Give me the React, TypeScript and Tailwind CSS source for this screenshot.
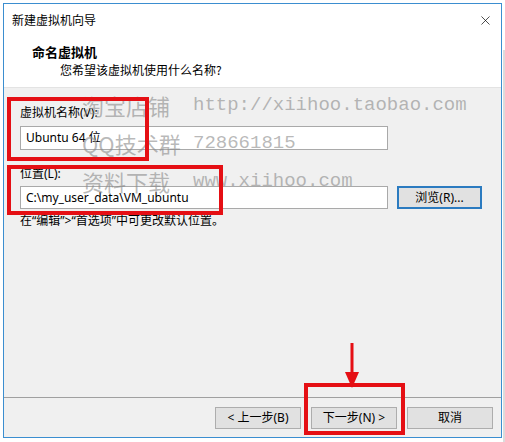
import { X } from 'lucide-react';

function WinButton({ label }: { label: string }) {
  return (
    <button className="w-[86px] h-[22px] bg-[#e1e1e1] border border-[#adadad] text-[12px] leading-[20px] text-black">
      {label}
    </button>
  );
}

function Mark({ cn, en }: { cn: string; en: string }) {
  return (
    <>
      <span className="text-[22px] leading-[38px] font-['Noto_Sans_CJK_SC',sans-serif]">{cn}</span>
      <span className="text-[19px] leading-[38px] font-['Liberation_Mono',monospace]">{en}</span>
    </>
  );
}

export default function App() {
  return (
    <div className="relative w-[505px] h-[442px] bg-white overflow-hidden font-['Noto_Sans','Noto_Sans_CJK_SC',sans-serif] text-black">
      {/* edge of the window behind */}
      <div className="absolute left-[503px] top-[50px] w-[2px] h-[392px] bg-[#dcdcdc]" />

      <div className="ml-[3px] mt-[3px] w-[499px] h-[435px] border border-[#3b8ed0] flex flex-col">
        {/* title + header */}
        <div className="bg-white h-[84px] flex flex-col border-b border-[#e3e3e3] font-['Noto_Sans_CJK_SC',sans-serif]">
          <div className="h-[32px] flex items-center justify-between px-[8px]">
            <span className="text-[12px]">新建虚拟机向导</span>
            <X size={15} strokeWidth={1.1} />
          </div>
          <div className="pl-[28px] pt-[8px] text-[13px] leading-[16px] font-bold">命名虚拟机</div>
          <div className="pl-[56px] pt-[2px] text-[12px] leading-[16px]">您希望该虚拟机使用什么名称?</div>
        </div>

        {/* body */}
        <div className="flex-1 bg-[#f0f0f0] pl-[16px] pt-[17px] text-[12px]">
          <div className="leading-[16px]">虚拟机名称(V):</div>
          <div className="mt-[5px] w-[368px] h-[24px] bg-white border border-[#a9a9a9] pl-[5px] leading-[22px]">
            Ubuntu 64 位
          </div>
          <div className="mt-[16px] leading-[16px]">位置(L):</div>
          <div className="mt-[4px] flex items-center gap-[9px]">
            <div className="w-[368px] h-[23px] bg-white border border-[#a9a9a9] pl-[5px] leading-[21px]">
              C:\my_user_data\VM_ubuntu
            </div>
            <button className="w-[85px] h-[23px] bg-[#e1e1e1] border-2 border-[#2b7bc0] leading-[19px]">
              浏览(R)...
            </button>
          </div>
          <div className="mt-[4px] leading-[16px]">在“编辑”&gt;“首选项”中可更改默认位置。</div>
        </div>

        {/* footer */}
        <div className="h-[40px] bg-[#f0f0f0] border-t border-[#a0a0a0] flex justify-end gap-[10px] pr-[8px] pt-[9px]">
          <WinButton label="< 上一步(B)" />
          <WinButton label="下一步(N) >" />
          <WinButton label="取消" />
        </div>
      </div>

      {/* watermark */}
      <div className="absolute left-[82px] top-[86px] grid grid-cols-[111px_auto] text-[#8a8a8a]/60 pointer-events-none">
        <Mark cn="淘宝店铺" en="http://xiihoo.taobao.com" />
        <Mark cn="QQ技术群" en="728661815" />
        <Mark cn="资料下载" en="www.xiihoo.com" />
      </div>

      {/* red annotations */}
      <div className="absolute left-[7px] top-[97px] w-[142px] h-[64px] border-4 border-[#e50f14]" />
      <div className="absolute left-[7px] top-[165px] w-[216px] h-[50px] border-4 border-[#e50f14]" />
      <div className="absolute left-[304px] top-[383px] w-[101px] h-[52px] border-4 border-[#e50f14]" />
      <svg className="absolute left-[342px] top-[340px]" width="20" height="50" viewBox="0 0 20 50">
        <line x1="10" y1="3" x2="10" y2="38" stroke="#e50f14" strokeWidth="3" />
        <polygon points="3,32 17,32 10,48" fill="#e50f14" />
      </svg>
    </div>
  );
}
